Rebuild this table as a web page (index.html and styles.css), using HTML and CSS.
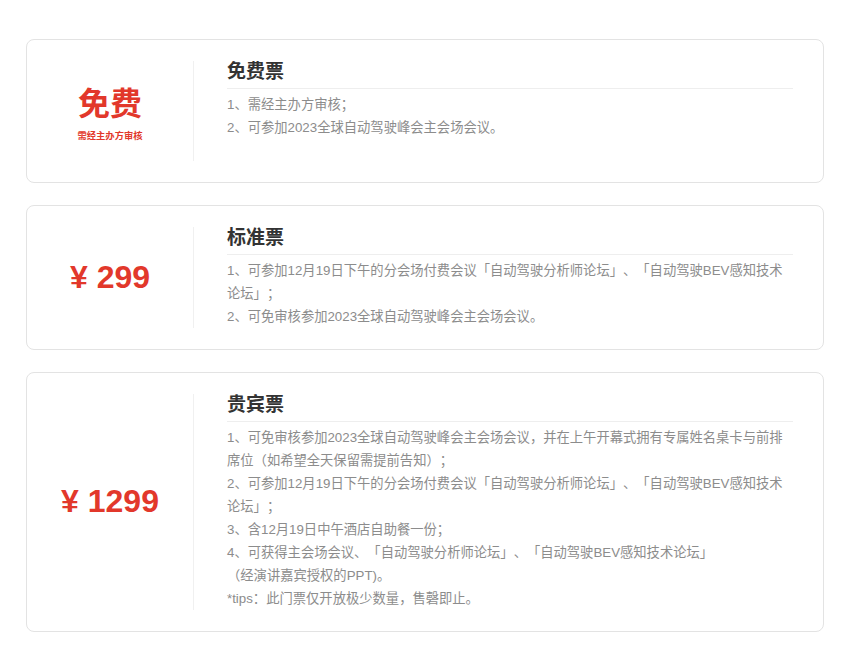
FILE: index.html
```html
<!DOCTYPE html>
<html>
<head>
    <meta charset="utf-8">
    <title>门票类型</title>
    <link rel="stylesheet" href="styles.css">
</head>
<body>
    <div class="ticket-list">
        <!-- 免费票 -->
        <div class="ticket">
            <div class="ticket-price">
                <div class="price-free">免费</div>
                <div class="price-note">需经主办方审核</div>
            </div>
            <div class="ticket-info">
                <h3 class="ticket-title">免费票</h3>
                <div class="ticket-desc">
                    <p>1、需经主办方审核；</p>
                    <p>2、可参加2023全球自动驾驶峰会主会场会议。</p>
                </div>
            </div>
        </div>

        <!-- 标准票 -->
        <div class="ticket">
            <div class="ticket-price">
                <div class="price-num">¥ 299</div>
            </div>
            <div class="ticket-info">
                <h3 class="ticket-title">标准票</h3>
                <div class="ticket-desc">
                    <p>1、可参加12月19日下午的分会场付费会议「自动驾驶分析师论坛」、「自动驾驶BEV感知技术<br>论坛」；</p>
                    <p>2、可免审核参加2023全球自动驾驶峰会主会场会议。</p>
                </div>
            </div>
        </div>

        <!-- 贵宾票 -->
        <div class="ticket">
            <div class="ticket-price">
                <div class="price-num">¥ 1299</div>
            </div>
            <div class="ticket-info">
                <h3 class="ticket-title">贵宾票</h3>
                <div class="ticket-desc">
                    <p>1、可免审核参加2023全球自动驾驶峰会主会场会议，并在上午开幕式拥有专属姓名桌卡与前排<br>席位（如希望全天保留需提前告知）；</p>
                    <p>2、可参加12月19日下午的分会场付费会议「自动驾驶分析师论坛」、「自动驾驶BEV感知技术<br>论坛」；</p>
                    <p>3、含12月19日中午酒店自助餐一份；</p>
                    <p>4、可获得主会场会议、「自动驾驶分析师论坛」、「自动驾驶BEV感知技术论坛」<br>（经演讲嘉宾授权的PPT)。</p>
                    <p>*tips：此门票仅开放极少数量，售磬即止。</p>
                </div>
            </div>
        </div>
    </div>
</body>
</html>
```

FILE: styles.css
```css
body {
    margin: 0;
    background-color: #ffffff;
    font-family: "Liberation Sans", "Noto Sans CJK SC", sans-serif;
}

.ticket-list {
    width: 798px;
    margin-left: 26px;
    padding: 39px 0 20px 0;
    display: flex;
    flex-direction: column;
    gap: 22px;
}

.ticket {
    display: flex;
    border: 1px solid #e3e3e3;
    border-radius: 8px;
    padding: 21px 30px 21px 0;
    min-height: 100px;
}

.ticket-price {
    width: 166px;
    flex-shrink: 0;
    border-right: 1px solid #f0f0f0;
    display: flex;
    flex-direction: column;
    align-items: center;
    justify-content: center;
    color: #e2382b;
    font-weight: bold;
}

.price-free {
    font-size: 32px;
    line-height: 38px;
    margin-top: 6px;
}

.price-note {
    font-size: 9.3px;
    line-height: 14px;
    margin-top: 6px;
}

.price-num {
    font-family: "Liberation Sans", sans-serif;
    font-size: 32px;
    line-height: 36px;
    margin-top: -2px;
}

.ticket-info {
    flex: 1;
    padding-left: 33px;
}

.ticket-title {
    margin: 0;
    font-size: 19px;
    line-height: 22px;
    color: #333333;
    padding-bottom: 5px;
    border-bottom: 1px solid #eeeeee;
}

.ticket-desc {
    margin-top: 4px;
    font-size: 13.3px;
    line-height: 23px;
    color: #8c8c8c;
    text-spacing-trim: space-all;
}

.ticket-desc p {
    margin: 0;
}
```
